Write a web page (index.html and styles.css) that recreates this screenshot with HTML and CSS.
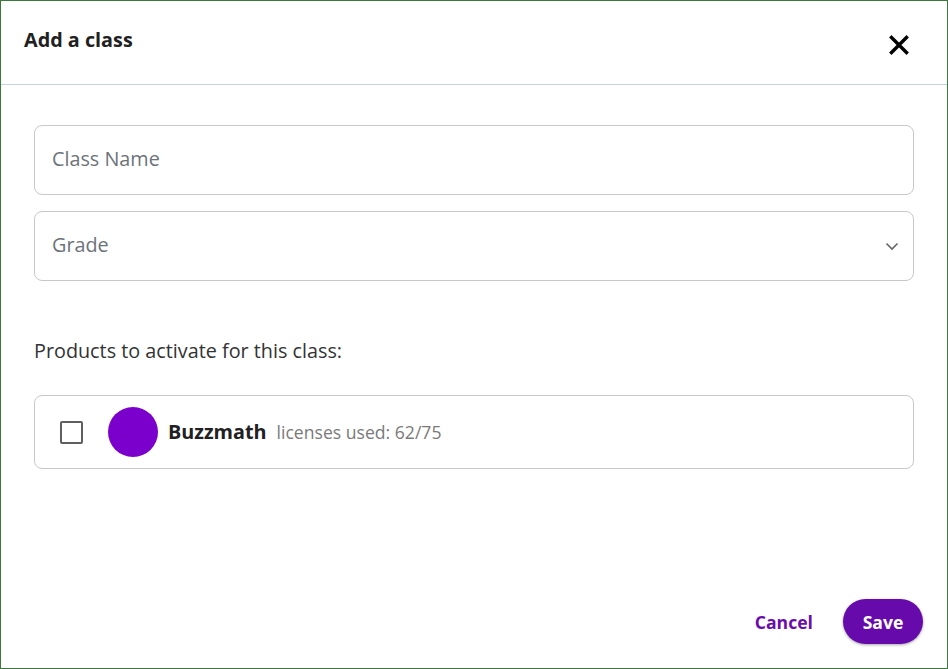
FILE: index.html
```html
<!DOCTYPE html>
<html>
<head>
<meta charset="utf-8">
<link rel="stylesheet" href="styles.css">
</head>
<body>
<div class="dialog">
  <header class="header">
    <h1 class="title">Add a class</h1>
    <button class="close" aria-label="Close">
      <svg width="20" height="20" viewBox="0 0 20 20"><path d="M2.5 2.5 L17.5 17.5 M17.5 2.5 L2.5 17.5" stroke="#000" stroke-width="3.4" stroke-linecap="square" fill="none"/></svg>
    </button>
  </header>
  <main class="body">
    <div class="field"><span class="placeholder">Class Name</span></div>
    <div class="field select"><span class="placeholder">Grade</span>
      <svg class="chev" width="14" height="9" viewBox="0 0 14 9"><path d="M1.5 1.5 L7 7 L12.5 1.5" stroke="#666" stroke-width="1.6" fill="none"/></svg>
    </div>
    <p class="label">Products to activate for this class:</p>
    <div class="product">
      <span class="checkbox"></span>
      <span class="logo"></span>
      <span class="pname">Buzzmath</span>
      <span class="licenses">licenses used: 62/75</span>
    </div>
  </main>
  <footer class="footer">
    <button class="cancel">Cancel</button>
    <button class="save">Save</button>
  </footer>
</div>
</body>
</html>
```
FILE: styles.css
```css
* { box-sizing: border-box; }
html, body { margin: 0; padding: 0; }
body {
  font-family: "Open Sans", "Noto Sans", sans-serif;
  background: #fff;
}
.dialog {
  width: 948px;
  height: 669px;
  border: 1px solid #3c7a3c;
  display: flex;
  flex-direction: column;
}
.header {
  height: 84px;
  border-bottom: 1px solid #c6d3dd;
  display: flex;
  align-items: flex-start;
  justify-content: space-between;
  padding: 0 38px 0 23px;
  flex-shrink: 0;
}
.title {
  margin: 25px 0 0;
  font-size: 19.8px;
  font-weight: 700;
  color: #212121;
  line-height: 28px;
}
.close {
  margin-top: 34px;
  background: none;
  border: 0;
  padding: 0;
  width: 20px;
  height: 20px;
  cursor: pointer;
}
.close svg { display: block; }
.body {
  flex: 1;
  padding: 40px 33px 0 33px;
  display: flex;
  flex-direction: column;
}
.field {
  height: 70px;
  border: 1px solid #c8c8c8;
  border-radius: 8px;
  display: flex;
  align-items: center;
  padding: 0 17px;
  margin-bottom: 16px;
}
.placeholder {
  font-size: 19.8px;
  color: #6c737a;
  line-height: 28px;
  margin-top: -2px;
}
.select { justify-content: space-between; padding-right: 14px; }
.chev { display: block; }
.label {
  margin: 40px 0 30px;
  font-size: 19.8px;
  color: #333;
  line-height: 28px;
}
.product {
  height: 74px;
  border: 1px solid #c8c8c8;
  border-radius: 8px;
  display: flex;
  align-items: center;
  padding: 0 25px;
}
.checkbox {
  width: 23px;
  height: 23px;
  border: 2.5px solid #5f5f5f;
  border-radius: 2px;
  margin-right: 25px;
  flex-shrink: 0;
}
.logo {
  width: 50px;
  height: 50px;
  border-radius: 50%;
  background: #7b00cc;
  margin-right: 10px;
  flex-shrink: 0;
}
.pname {
  font-size: 19.8px;
  font-weight: 700;
  color: #212121;
  margin-right: 10px;
  margin-top: -2px;
}
.licenses {
  font-size: 17.6px;
  color: #7a7a7a;
}
.footer {
  height: 98px;
  display: flex;
  align-items: flex-start;
  justify-content: flex-end;
  padding: 29px 24px 0 0;
  flex-shrink: 0;
}
.cancel {
  background: none;
  border: 0;
  font-family: inherit;
  font-size: 17.6px;
  font-weight: 700;
  color: #6a0dad;
  height: 45px;
  padding: 0;
  margin-right: 30px;
}
.save {
  background: #660aab;
  border: 0;
  border-radius: 23px;
  color: #fff;
  font-family: inherit;
  font-size: 17.6px;
  font-weight: 700;
  width: 80px;
  height: 45px;
  box-shadow: 0 1px 3px rgba(0,0,0,0.35);
}
```
